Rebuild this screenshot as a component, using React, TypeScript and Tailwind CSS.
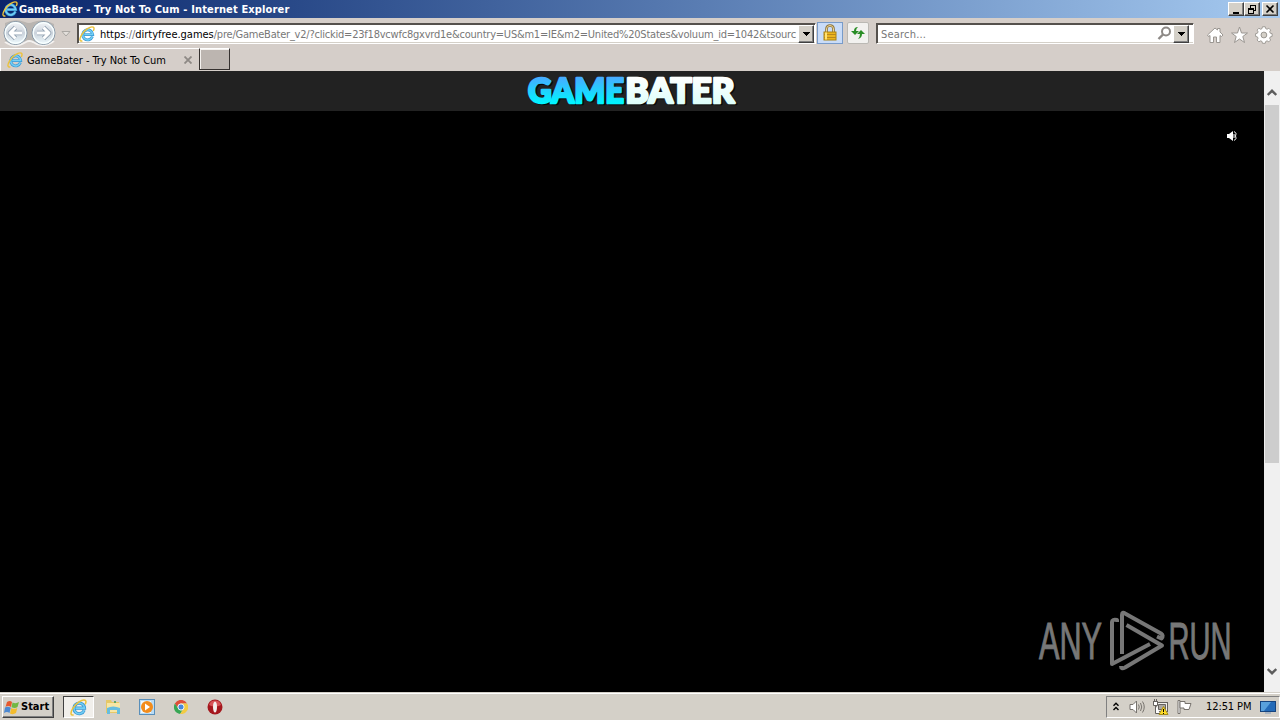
import type { ReactNode } from 'react'

const Raised = ({ className, children }: { className: string; children?: ReactNode }) => (
  <div
    className={`flex shrink-0 items-center justify-center border border-t-white border-l-white border-r-[#404040] border-b-[#404040] bg-[#d4d0c8] shadow-[inset_-1px_-1px_0_#808080] ${className}`}
  >
    {children}
  </div>
)

const IELogo = ({ size = 16 }: { size?: number }) => (
  <svg width={size} height={size} viewBox="0 0 16 16" fill="none" className="shrink-0">
    <path d="M13.4 10.6A5 5 0 1 1 13.7 8.6H5.2" stroke="#3a97d3" strokeWidth="2.9" />
    <path d="M13.4 10.6A5 5 0 1 1 13.7 8.6H5.2" stroke="#72cff5" strokeWidth="1.5" />
    <path d="M3.4 14.8C.4 16 .2 12.8 2.6 8.8C5.5 4 11.5-.2 14.3 1.2C15.5 1.9 15 3.7 14.2 5" stroke="#ecc23a" strokeWidth="1.4" />
  </svg>
)

const DownTriangle = () => (
  <svg width="7" height="4" viewBox="0 0 7 4" shapeRendering="crispEdges">
    <path d="M0 0H7L3.5 4Z" fill="#000" />
  </svg>
)

const TitleBar = () => (
  <header className="flex h-[18px] items-center bg-linear-to-r from-[#0a246a] to-[#a6caf0] pr-0.5 pl-0.5">
    <IELogo size={16} />
    <h1 className="ml-px pt-px text-[11px] leading-4 font-bold tracking-[0.14px] whitespace-nowrap text-white">
      GameBater - Try Not To Cum - Internet Explorer
    </h1>
    <div className="ml-auto flex">
      <Raised className="h-3.5 w-4">
        <svg width="12" height="10" shapeRendering="crispEdges">
          <path d="M3 8H9V10H3Z" />
        </svg>
      </Raised>
      <Raised className="h-3.5 w-4">
        <svg width="12" height="10" fill="none" stroke="#000" shapeRendering="crispEdges">
          <path d="M4.5 4V1.5H9.5V6.5H8M4 1H10M2.5 4.5H7.5V9.5H2.5ZM2 4H8" />
          <path d="M4 1.5H10M2 5.5H8" />
        </svg>
      </Raised>
      <Raised className="ml-0.5 h-3.5 w-4">
        <svg width="12" height="10" stroke="#000" strokeWidth="1.6">
          <path d="M2.5 1.5L9.5 8.5M9.5 1.5L2.5 8.5" />
        </svg>
      </Raised>
    </div>
  </header>
)

const NavButtons = () => (
  <svg width="74" height="30" viewBox="0 0 74 30" className="shrink-0">
    <defs>
      <linearGradient id="nav" x2="0" y2="1">
        <stop stopColor="#f5f7f9" />
        <stop offset=".5" stopColor="#cbd3dc" />
        <stop offset="1" stopColor="#f0fcff" />
      </linearGradient>
    </defs>
    <path d="M5 5Q15 0 25 4Q29 6 33 4Q43 0 54 6V24Q43 30 33 25Q29 23 25 25Q15 30 5 25Z" fill="#b9b5b1" />
    <path d="M5 24Q15 31 26 24Q29 22 33 24Q43 31 54 23" fill="none" stroke="#f4f2f0" strokeWidth="2" />
    {[15.5, 43.5].map((x) => (
      <g key={x}>
        <circle cx={x} cy="15" r="11.5" fill="url(#nav)" stroke="#8496a6" />
        <circle cx={x} cy="15" r="10.3" fill="none" stroke="#f8ffff" strokeWidth="1.2" />
      </g>
    ))}
    <g fill="none" strokeLinejoin="round">
      <path d="M22 15H10M15.5 9.5L10 15L15.5 20.5M37 15H49M43.5 9.5L49 15L43.5 20.5" stroke="#93a3b3" strokeWidth="4.6" />
      <path d="M22 15H10M15.5 9.5L10 15L15.5 20.5M37 15H49M43.5 9.5L49 15L43.5 20.5" stroke="#fff" strokeWidth="3" />
    </g>
    <path d="M62 13.5H70L66 18Z" fill="#e4e0dc" stroke="#aaa7a3" />
  </svg>
)

const LockIcon = () => (
  <svg width="16" height="18" viewBox="0 0 16 18" fill="none">
    <path d="M4.5 9V5Q4.5 1.5 8 1.5T11.5 5V9" stroke="#897039" strokeWidth="2.6" />
    <path d="M4.5 9V5Q4.5 1.5 8 1.5T11.5 5V9" stroke="#eed796" />
    <rect x="2" y="8" width="12" height="8" fill="#ecb51f" stroke="#aa8215" />
    <path d="M2 10.5H14M2 13.5H14" stroke="#b9891c" />
    <path d="M4 8.5V15.5" stroke="#ffe274" strokeWidth="2" />
  </svg>
)

const RefreshIcon = () => (
  <svg width="16" height="16" viewBox="0 0 16 16" fill="#298d25">
    <path d="M4 6Q4 2 8 2Q6 3.5 6 6H9L5 10L1 6Z" />
    <path d="M11 5L15 9H12Q12 13 8 14Q10 12 10 9H7Z" />
  </svg>
)

const BrowserTools = () => (
  <svg width="70" height="22" viewBox="0 0 70 22" className="shrink-0" fill="#fff" stroke="#9a9691" strokeLinejoin="round">
    <path d="M1.5 11L9 4L11.5 6V4.5H14V8L17 11L15.5 12.5L14 11.5V18.5H10.5V13H7.5V18.5H4V11.5L2.5 12.5Z" />
    <path d="M33.5 3L35.5 9H41.5L36.8 12.5L38.5 18.5L33.5 15L28.5 18.5L30.2 12.5L25.5 9H31.5Z" />
    <path d="M56.5 3H59.5L60 5L61.5 5.7L63.4 4.6L65.4 6.6L64.3 8.5L65 10L67 10.5V13.5L65 14L64.3 15.5L65.4 17.4L63.4 19.4L61.5 18.3L60 19L59.5 21H56.5L56 19L54.5 18.3L52.6 19.4L50.6 17.4L51.7 15.5L51 14L49 13.5V10.5L51 10L51.7 8.5L50.6 6.6L52.6 4.6L54.5 5.7L56 5Z" transform="translate(4.5 0) scale(.92)" />
    <circle cx="57.9" cy="11" r="2.9" fill="#d4d0c8" />
  </svg>
)

const AddressBar = () => (
  <div className="flex h-[30px] items-start">
    <NavButtons />
    <div className="mt-[5px] ml-[3px] flex h-[21px] w-[739px] shrink-0 items-center border border-t-[#55514d] border-l-[#55514d] border-r-white border-b-white bg-white pr-px pl-px shadow-[inset_1px_1px_0_#55514d,inset_0_-1px_0_#d4d0c8]">
      <IELogo />
      <p className="ml-[5px] pt-0.5 text-[11px] leading-4 tracking-[-0.22px] whitespace-nowrap text-[#777]">
        <span className="tracking-[-0.02px]">
          <span className="text-black">https</span>://<span className="text-black">dirtyfree.games</span>
        </span>
        /pre/GameBater_v2/?clickid=23f18vcwfc8gxvrd1e&amp;country=US&amp;m1=IE&amp;m2=United%20States&amp;voluum_id=1042&amp;tsourc
      </p>
      <Raised className="ml-auto h-[18px] w-4">
        <DownTriangle />
      </Raised>
    </div>
    <div className="mt-1 ml-px flex h-[22px] w-[26px] shrink-0 items-center justify-center border border-[#789bc9] bg-[#c9dcf8]">
      <LockIcon />
    </div>
    <div className="mt-1 ml-1 flex h-[22px] w-[22px] shrink-0 items-center justify-center rounded-xs border border-[#bbb9b4] bg-[#f2f1ef]">
      <RefreshIcon />
    </div>
    <div className="mt-[5px] ml-[7px] flex h-[21px] w-[318px] shrink-0 items-center border border-t-[#55514d] border-l-[#55514d] border-r-white border-b-white bg-white pr-1 pl-1 shadow-[inset_1px_1px_0_#55514d,inset_0_-1px_0_#d4d0c8]">
      <span className="pt-0.5 text-[11px] leading-4 tracking-[0.2px] text-[#777]">Search...</span>
      <svg width="15" height="15" className="mr-px ml-auto" fill="none" stroke="#8d8986" strokeWidth="2">
        <circle cx="9" cy="5.5" r="4" />
        <path d="M6 8.5L1.5 13" strokeWidth="2.4" />
      </svg>
      <Raised className="h-[18px] w-4">
        <DownTriangle />
      </Raised>
    </div>
    <div className="mt-[6px] mr-1 ml-auto">
      <BrowserTools />
    </div>
  </div>
)

const TabStrip = () => (
  <div className="flex h-[23px] items-start">
    <div className="flex h-[23px] w-[199px] items-center border-t border-l border-white pl-1.5">
      <IELogo />
      <span className="ml-1 pt-px text-[11px] leading-4 tracking-[-0.06px] whitespace-nowrap">GameBater - Try Not To Cum</span>
      <svg width="8" height="8" className="mr-[7px] ml-auto" stroke="#8e8985" strokeWidth="1.8">
        <path d="M.5 .5L7.5 7.5M7.5 .5L.5 7.5" />
      </svg>
    </div>
    <div className="h-[22px] w-[31px] border border-t-white border-r-[#35312f] border-b-[#35312f] border-l-[#35312f] bg-[#bcb5b0] shadow-[inset_1px_1px_0_#f5f2ef]" />
  </div>
)

const GameLogo = () => (
  <svg width="218" height="40" viewBox="0 0 218 40">
    <defs>
      <linearGradient id="blue" gradientUnits="userSpaceOnUse" x1="0" y1="5" x2="0" y2="32">
        <stop stopColor="#4ba7ff" />
        <stop offset="1" stopColor="#00f4ff" />
      </linearGradient>
      <linearGradient id="pale" gradientUnits="userSpaceOnUse" x1="0" y1="5" x2="0" y2="32">
        <stop stopColor="#fff" />
        <stop offset="1" stopColor="#dffffb" />
      </linearGradient>
    </defs>
    <g fontFamily="Lato, sans-serif" fontWeight="900" fontSize="34" strokeWidth="2.6" strokeLinejoin="round">
      <g fill="#080808" stroke="#080808">
        <text x="6.5" y="32.5" textLength="96" lengthAdjust="spacingAndGlyphs">GAME</text>
        <text x="104" y="32.5" textLength="109" lengthAdjust="spacingAndGlyphs">BATER</text>
      </g>
      <text x="5" y="31.5" textLength="96" lengthAdjust="spacingAndGlyphs" fill="url(#blue)" stroke="url(#blue)">GAME</text>
      <text x="102.5" y="31.5" textLength="109" lengthAdjust="spacingAndGlyphs" fill="url(#pale)" stroke="url(#pale)">BATER</text>
    </g>
  </svg>
)

const Watermark = () => (
  <svg width="196" height="64" viewBox="0 0 196 64" fill="none">
    <g fill="#777" stroke="#777" strokeWidth="1" fontFamily="'Liberation Sans Narrow', 'Liberation Sans', sans-serif" fontSize="51">
      <text x="2" y="49.5" textLength="63" lengthAdjust="spacingAndGlyphs">ANY</text>
      <text x="131.5" y="49.5" textLength="63" lengthAdjust="spacingAndGlyphs">RUN</text>
    </g>
    <g stroke="#777" strokeWidth="4" strokeLinejoin="round">
      <path d="M80 13V11Q75 10 75 13V55L113 35" />
      <path d="M85 45V6Q85 2.5 88 4.5L124 24.5Q127 26.5 124.5 29.5L120 27.5" />
      <path d="M89.5 16L125 36.5L88 58.5Q84 60.5 84 57" />
    </g>
  </svg>
)

const Page = () => (
  <main className="flex h-[621px] bg-black">
    <div className="flex grow flex-col">
      <div className="flex h-10 justify-center bg-[#222]">
        <GameLogo />
      </div>
      <svg width="12" height="12" className="mt-[19px] mr-[26px] self-end" fill="#fff">
        <path d="M1 4H3L7 1V11L3 8H1Z" />
        <path d="M8 1.5Q11.5 3 9.5 6Q11.5 9 8 10.5M8 4V8" fill="none" stroke="#fff" />
      </svg>
      <div className="mt-auto mr-[31px] mb-[19px] self-end">
        <Watermark />
      </div>
    </div>
    <div className="flex w-4 flex-col items-center bg-[#f0f0f0]">
      <svg width="10" height="7" className="mt-[18px]" fill="none" stroke="#5d5d5d" strokeWidth="2.4">
        <path d="M.7 6L5 1.8L9.3 6" />
      </svg>
      <div className="mt-[9px] h-[358px] w-3.5 bg-[#cdcdcd]" />
      <svg width="10" height="7" className="mt-auto mb-[17px]" fill="none" stroke="#5d5d5d" strokeWidth="2.4">
        <path d="M.7 1L5 5.2L9.3 1" />
      </svg>
    </div>
  </main>
)

const WindowsFlag = () => (
  <svg width="16" height="15" viewBox="0 0 16 15">
    <path d="M3 2Q6 0 8 2L7 7Q4 5 1.5 7Z" fill="#e6592d" />
    <path d="M8.5 2.5Q12 4 15 2L13.5 7Q11 9 7.5 7.3Z" fill="#72b843" />
    <path d="M1 7.5Q4 6 6.8 7.8L5.5 13Q3 11 0 13Z" fill="#4d89d1" />
    <path d="M7.3 8Q10 9.7 13.3 8L12 13Q9 15 6 13.5Z" fill="#f3bc2d" />
  </svg>
)

const Launchers = () => (
  <div className="ml-[11px] flex items-center gap-[18px]">
    <svg width="16" height="16" viewBox="0 0 16 16">
      <path d="M1 1H6L7 3H14V14H1Z" fill="#e6c867" />
      <path d="M2 4H15V13H2Z" fill="#f6e6a5" />
      <path d="M2 9Q8 6 15 9V15H12V11H5V15H2Z" fill="#66bddf" />
      <path d="M9 2H11V4H9Z" fill="#60a66a" />
    </svg>
    <svg width="16" height="16" viewBox="0 0 16 16">
      <rect x=".5" y=".5" width="15" height="15" fill="#b9dcf6" stroke="#598fba" />
      <rect x="2" y="2" width="10" height="12" fill="#eff8fc" />
      <circle cx="8" cy="8" r="6" fill="#f28c1c" />
      <path d="M6 4.5L11 8L6 11.5Z" fill="#fff" />
    </svg>
    <svg width="14" height="14" viewBox="0 0 16 16" className="mx-px">
      <path d="M1 4A8 8 0 0 1 15 4H8A4 4 0 0 0 4.5 10Z" fill="#df4e38" />
      <path d="M1 4L5 10Q7 13 10 11L7 16A8 8 0 0 1 1 4Z" fill="#38a654" />
      <path d="M8 4H15A8 8 0 0 1 7 16L11 10Q13 7 8 4Z" fill="#f2cb43" />
      <circle cx="8" cy="8" r="3.5" fill="#4788dc" stroke="#fff" />
    </svg>
    <svg width="16" height="16" viewBox="0 0 16 16">
      <circle cx="8" cy="8" r="7.5" fill="#a5171d" />
      <path d="M2 6A6.3 6.3 0 0 1 14 6Q8 9 2 6Z" fill="#d75357" />
      <ellipse cx="8" cy="8" rx="2" ry="5.5" fill="#f4efed" />
    </svg>
  </div>
)

const Tray = () => (
  <div className="ml-auto flex h-[22px] w-[174px] items-center border border-t-[#808080] border-r-white border-b-white border-l-[#808080] pl-1.5">
    <svg width="6" height="9" className="mb-0.5" fill="none" stroke="#000" strokeWidth="1.4">
      <path d="M.5 3.8L3 1.3L5.5 3.8M.5 8L3 5.5L5.5 8" />
    </svg>
    <svg width="17" height="16" className="ml-2.5" fill="#fff" stroke="#77736e">
      <path d="M1 5.5H4L7.5 2V14L4 10.5H1Z" />
      <path d="M9.5 5.5Q11 8 9.5 10.5M11.5 4Q14 8 11.5 12M13.5 2.5Q17 8 13.5 13.5" fill="none" />
    </svg>
    <svg width="17" height="17" className="ml-[6px]" fill="none" stroke="#65625f">
      <rect x="4.5" y="3.5" width="11" height="9" fill="#f0efed" />
      <path d="M6.5 5.5H13.5V10.5H6.5Z" fill="#aaa7a3" />
      <path d="M1.5 2V6.5H5.5V2M1 2.5H6M2.5 0V3M4.5 0V3M3.5 6V14.5H8" fill="#fff" />
      <path d="M11.5 7.5L16 15.5H7Z" fill="#ffdc25" stroke="#a68d19" />
      <path d="M11.5 10V13M11.5 14V15" stroke="#000" />
    </svg>
    <svg width="17" height="16" className="ml-[7px]" fill="#fff" stroke="#77736e">
      <path d="M2 1.5H4V14.5H2Z" />
      <path d="M4 2.5H9V4.5H15L13 10.5H8V9H4Z" />
    </svg>
    <span className="ml-[13px] w-[46px] text-[11px] leading-4 tracking-[-0.1px] whitespace-nowrap">12:51 PM</span>
    <svg width="16" height="14" className="ml-[8px]">
      <rect x=".5" y="1.5" width="15" height="10" fill="#246bb8" stroke="#16447e" />
      <path d="M1 2H11L4 11H1Z" fill="#59a1dc" />
      <path d="M5 12H11V14H5Z" fill="#a9b5c2" />
    </svg>
  </div>
)

const Taskbar = () => (
  <footer className="flex h-7 items-center border-t border-[#d4d0c8] bg-[#d4d0c8] pt-px pl-0.5 shadow-[inset_0_1px_0_#fff]">
    <Raised className="h-[22px] w-[52px]">
      <WindowsFlag />
      <span className="ml-px w-[31px] text-[11px] leading-4 font-bold">Start</span>
    </Raised>
    <div className="ml-[9px] flex h-[22px] w-[31px] items-center justify-center border border-t-[#404040] border-r-white border-b-white border-l-[#404040] bg-[#f1efeb]">
      <IELogo size={17} />
    </div>
    <Launchers />
    <Tray />
  </footer>
)

export default function App() {
  return (
    <div className="h-[720px] w-[1280px] overflow-hidden bg-[#d5cec9] font-['DejaVu_Sans_Condensed','DejaVu_Sans',sans-serif] text-black">
      <TitleBar />
      <AddressBar />
      <TabStrip />
      <Page />
      <Taskbar />
    </div>
  )
}
